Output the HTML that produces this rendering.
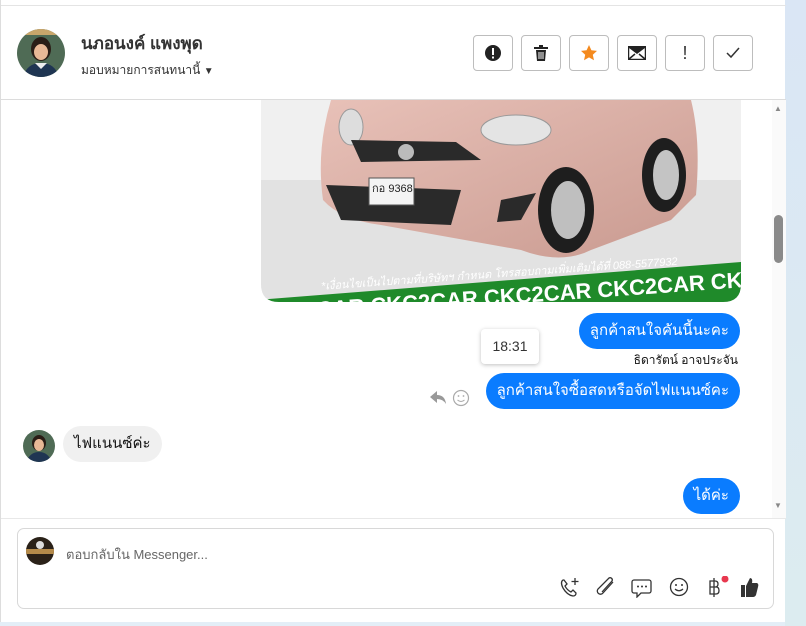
<!DOCTYPE html>
<html><head><meta charset="utf-8"><style>
*{box-sizing:border-box;margin:0;padding:0}
body{width:806px;height:626px;overflow:hidden;background:#e3eef7;font-family:"Liberation Sans","DejaVu Sans",sans-serif;position:relative}
.panel{position:absolute;left:0;top:0;width:785px;height:622px;background:#fff;border-left:1px solid #ddd}
.topline{position:absolute;left:0;top:5px;width:785px;height:1px;background:#e4e4e4}
.hdr{position:absolute;left:0;top:99px;width:785px;height:1px;background:#dcdcdc}
.btn{position:absolute;top:35px;width:40px;height:36px;border:1px solid #bdbdbd;border-radius:4px;background:#fff;display:flex;align-items:center;justify-content:center;color:#333;font-size:17px}
.bub{position:absolute;background:#0a7cff;color:#fff;font-size:15px;border-radius:18px;padding:0 11px;height:36px;line-height:36px;white-space:nowrap}
.grey{background:#f0f0f0;color:#111}
.right{position:absolute;right:0;top:0;width:21px;height:626px;background:linear-gradient(#dae6f5,#dcecf0)}
</style></head><body>
<div class="right"></div>
<div class="panel">
<div class="topline"></div>
<svg style="position:absolute;left:16px;top:29px" width="48" height="48"><defs><clipPath id="c1"><circle cx="24" cy="24" r="24"/></clipPath></defs><g clip-path="url(#c1)"><rect width="48" height="48" fill="#4f6b55"/><rect width="48" height="6" fill="#c9a66b"/><ellipse cx="24" cy="20" rx="10" ry="12" fill="#2a1d16"/><ellipse cx="24" cy="23" rx="7" ry="8" fill="#e8b896"/><path d="M6 48 Q10 34 24 34 Q38 34 42 48Z" fill="#1f3552"/><path d="M18 34 L24 40 L30 34Z" fill="#eee"/></g></svg>
<div style="position:absolute;left:80px;top:30px;font-size:17px;font-weight:bold;color:#333">นภอนงค์ แพงพุด</div>
<div style="position:absolute;left:80px;top:61px;font-size:12px;color:#333">มอบหมายการสนทนานี้ <span style="font-size:10px">▼</span></div>
<div class="btn" style="left:472px"><svg width="18" height="18"><circle cx="9" cy="9" r="8" fill="#222"/><rect x="8" y="4" width="2" height="7" fill="#fff"/><rect x="8" y="12.5" width="2" height="2" fill="#fff"/></svg></div>
<div class="btn" style="left:520px"><svg width="16" height="18"><rect x="1" y="3" width="14" height="2" fill="#222"/><rect x="6" y="1" width="4" height="2" fill="#222"/><path d="M3 6h10l-1 11H4z" fill="#222"/><path d="M6 8v7M8 8v7M10 8v7" stroke="#fff" stroke-width="1"/></svg></div>
<div class="btn" style="left:568px"><svg width="18" height="18"><path d="M9 1l2.4 5.3 5.6.6-4.2 3.8 1.2 5.6L9 13.4 4 16.3l1.2-5.6L1 6.9l5.6-.6z" fill="#f48a1f"/></svg></div>
<div class="btn" style="left:616px"><svg width="18" height="14"><rect x="0.5" y="0.5" width="17" height="13" fill="#fff" stroke="#222" stroke-width="1.5"/><path d="M1 1l8 6 8-6M1 13l6-5M17 13l-6-5" stroke="#222" stroke-width="1.5" fill="none"/><path d="M1 1l8 6 8-6z" fill="#222"/></svg></div>
<div class="btn" style="left:664px;font-size:18px">!</div>
<div class="btn" style="left:712px"><svg width="14" height="12"><path d="M1 6l4 4 8-9" stroke="#333" stroke-width="1.5" fill="none"/></svg></div>
<div class="hdr"></div>

<svg style="position:absolute;left:260px;top:100px" width="480" height="202"><defs><clipPath id="ci"><path d="M0 0H480V184Q480 202 462 202H18Q0 202 0 184Z"/></clipPath><linearGradient id="car" x1="0" y1="0" x2="1" y2="1"><stop offset="0" stop-color="#e8c1b8"/><stop offset="1" stop-color="#c99a90"/></linearGradient></defs>
<g clip-path="url(#ci)">
<rect width="480" height="202" fill="#f0f0f0"/>
<rect y="80" width="480" height="122" fill="#e2e2e2"/>
<path d="M70 0H430Q440 40 435 95L410 120 L330 150 Q300 165 260 150 L120 125 Q80 120 62 100 Q55 50 70 0Z" fill="url(#car)"/>
<ellipse cx="90" cy="27" rx="12" ry="18" fill="#ddd" stroke="#999"/>
<ellipse cx="255" cy="30" rx="35" ry="15" fill="#e4e4e4" stroke="#999"/>
<path d="M90 40 L195 42 L220 60 L100 62Z" fill="#2a2a2a"/>
<circle cx="145" cy="52" r="8" fill="#bbb"/>
<path d="M65 85 L200 90 L190 125 L80 120Z" fill="#2a2a2a"/>
<rect x="108" y="78" width="45" height="27" fill="#f4f4f4" stroke="#555"/>
<text x="111" y="92" font-size="11" font-family="Liberation Sans" fill="#222">กอ 9368</text>
<path d="M240 100 L275 93 L260 120 L236 122Z" fill="#2a2a2a"/>
<ellipse cx="305" cy="110" rx="28" ry="43" fill="#1e1e1e"/><ellipse cx="307" cy="110" rx="17" ry="29" fill="#bfbfbf"/>
<ellipse cx="403" cy="75" rx="22" ry="37" fill="#1e1e1e"/><ellipse cx="405" cy="75" rx="13" ry="25" fill="#c4c4c4"/>
<path d="M-5 200 L480 162 L480 202 L-5 202Z" fill="#1f8a2a"/>
<text x="60" y="180" font-size="11" font-style="italic" fill="#fff" transform="rotate(-4 200 180)" font-family="Liberation Sans">*เงื่อนไขเป็นไปตามที่บริษัทฯ กำหนด โทรสอบถามเพิ่มเติมได้ที่ 088-5577932</text>
<text x="-5" y="207" font-size="22" font-weight="bold" fill="#fff" transform="rotate(-4 200 190)" font-family="Liberation Sans">CKC2CAR CKC2CAR CKC2CAR CKC2CAR CKC2</text>
</g></svg>

<div class="bub" style="right:45px;top:313px">ลูกค้าสนใจคันนี้นะคะ</div>
<div style="position:absolute;left:480px;top:329px;width:58px;height:35px;background:#fff;border-radius:4px;box-shadow:0 1px 4px rgba(0,0,0,.25);font-size:14px;color:#333;text-align:center;line-height:35px">18:31</div>
<div style="position:absolute;right:47px;top:351px;font-size:12px;color:#111">ธิดารัตน์ อาจประจัน</div>
<div class="bub" style="right:45px;top:373px">ลูกค้าสนใจซื้อสดหรือจัดไฟแนนซ์คะ</div>
<svg style="position:absolute;left:428px;top:389px" width="42" height="18"><path d="M1 8l7-6v4q8 0 9 9q-3-5-9-5v4z" fill="#999"/><circle cx="32" cy="9" r="7.5" fill="none" stroke="#aaa" stroke-width="1.2"/><circle cx="29.5" cy="7" r="0.9" fill="#aaa"/><circle cx="34.5" cy="7" r="0.9" fill="#aaa"/><path d="M28.5 11q3.5 3 7 0" stroke="#aaa" fill="none"/></svg>

<svg style="position:absolute;left:22px;top:430px" width="32" height="32"><defs><clipPath id="c2"><circle cx="16" cy="16" r="16"/></clipPath></defs><g clip-path="url(#c2)"><rect width="32" height="32" fill="#4f6b55"/><ellipse cx="16" cy="13" rx="7" ry="8" fill="#2a1d16"/><ellipse cx="16" cy="15" rx="5" ry="6" fill="#e8b896"/><path d="M3 32Q7 22 16 22Q25 22 29 32Z" fill="#1f3552"/></g></svg>
<div class="bub grey" style="left:62px;top:426px">ไฟแนนซ์ค่ะ</div>
<div class="bub" style="right:45px;top:478px">ได้ค่ะ</div>

<div style="position:absolute;left:771px;top:100px;width:14px;height:418px;background:#fafafa"></div>
<div style="position:absolute;left:773px;top:215px;width:9px;height:48px;border-radius:5px;background:#8a8a8a"></div>
<div style="position:absolute;left:773px;top:104px;font-size:8px;color:#888">▲</div>
<div style="position:absolute;left:773px;top:501px;font-size:8px;color:#888">▼</div>
<div style="position:absolute;left:0;top:518px;width:785px;height:1px;background:#e8e8e8"></div>

<div style="position:absolute;left:16px;top:528px;width:757px;height:81px;border:1px solid #d8d8d8;border-radius:7px"></div>
<svg style="position:absolute;left:25px;top:537px" width="28" height="28"><defs><clipPath id="c3"><circle cx="14" cy="14" r="14"/></clipPath></defs><g clip-path="url(#c3)"><rect width="28" height="28" fill="#2a2118"/><rect y="12" width="28" height="5" fill="#b48a4a"/><circle cx="14" cy="8" r="4" fill="#ddd"/></g></svg>
<div style="position:absolute;left:65px;top:544px;font-size:13px;color:#666">ตอบกลับใน Messenger...</div>
<svg style="position:absolute;left:558px;top:576px" width="210" height="22">
<path d="M4 4q-3 2 0 8q4 7 10 8q3 0 3-3l-3-3-2 2q-4-2-6-6l2-2-3-4z" fill="none" stroke="#333" stroke-width="1.3"/><path d="M16 2v7M12.5 5.5h7" stroke="#333" stroke-width="1.3"/>
<path d="M54 6 L44 17 a3 3 0 0 1 -5 -4 L50 2 a2.2 2.2 0 0 1 3 3 L43 16" fill="none" stroke="#333" stroke-width="1.3"/>
<path d="M75 4h15a2 2 0 0 1 2 2v9a2 2 0 0 1-2 2h-8l-4 4v-4h-3a2 2 0 0 1-2-2v-9a2 2 0 0 1 2-2z" fill="none" stroke="#333" stroke-width="1.3"/><circle cx="79" cy="10.5" r="1" fill="#333"/><circle cx="83" cy="10.5" r="1" fill="#333"/><circle cx="87" cy="10.5" r="1" fill="#333"/>
<circle cx="120" cy="11" r="8.5" fill="none" stroke="#333" stroke-width="1.3"/><circle cx="117" cy="9" r="1" fill="#333"/><circle cx="123" cy="9" r="1" fill="#333"/><path d="M116 13q4 3.5 8 0" stroke="#333" fill="none" stroke-width="1.2"/>
<path d="M151 5h5q3 0 3 3t-3 3h-5zM151 11h6q3 0 3 3.5t-3 3.5h-6zM151 5v13M155 2v19" fill="none" stroke="#333" stroke-width="1.3"/><circle cx="166" cy="3" r="3.5" fill="#e8384f"/>
<path d="M182 9h4v12h-4z M187 10l4-8q3 0 2 5h5q2 1 1 4l-2 8q-1 2-3 2h-7z" fill="#333"/>
</svg>
</div>
</body></html>
